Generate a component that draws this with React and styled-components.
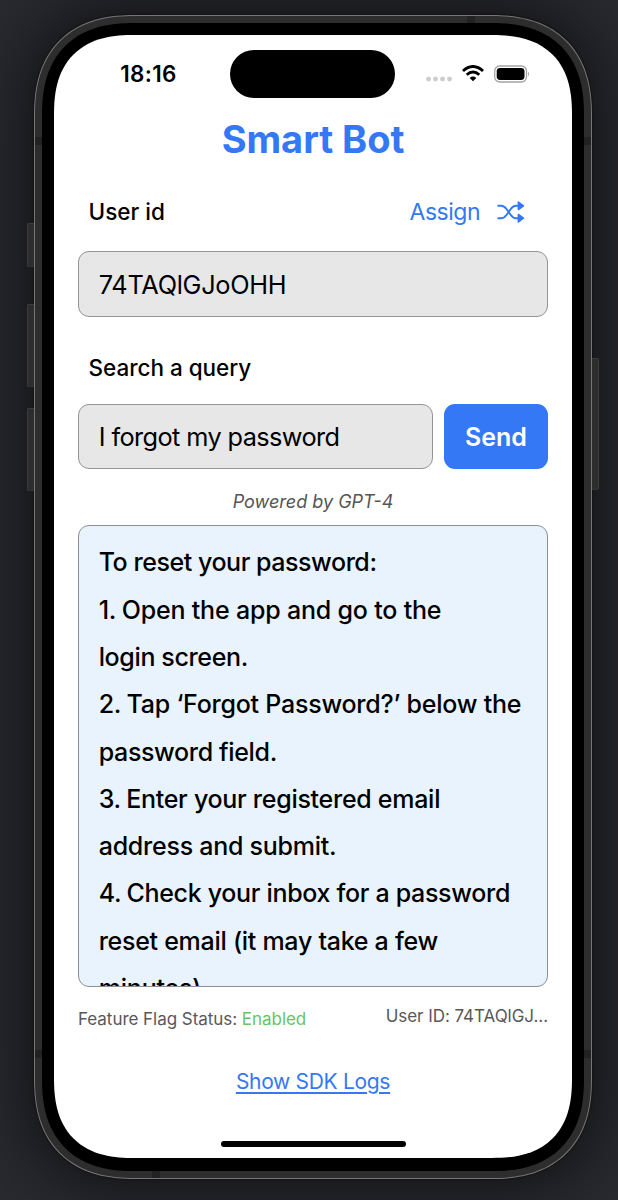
import React from 'react';
import styled, { createGlobalStyle } from 'styled-components';

const blue = '#3478f6';

const GlobalStyle = createGlobalStyle`
  *, *::before, *::after { box-sizing: border-box; }
  html, body { margin: 0; padding: 0; }
  body { font-family: Inter, "Liberation Sans", sans-serif; color: #000; overflow: hidden; }
`;

const Stage = styled.main`
  width: 618px;
  height: 1200px;
  padding: 15px 26px 21px 34px;
  background: #292a30;
  overflow: hidden;
`;

const Phone = styled.div`
  position: relative;
  width: 558px;
  height: 1164px;
  padding: 1px;
  background: #777675;
  border-radius: 100px;
  corner-shape: superellipse(1.24);
  box-shadow: 0 0 2px #050505, 0 0 70px 8px rgba(0, 0, 0, 0.62);
`;

const Frame = styled.div`
  height: 100%;
  padding: 7px;
  background: #2d2d2d;
  border-radius: 99px;
  corner-shape: superellipse(1.24);
`;

const Bezel = styled.div`
  height: 100%;
  padding: 12px 12px 13px;
  background: #000;
  border-radius: 92px;
  corner-shape: superellipse(1.26);
`;

const Screen = styled.div`
  position: relative;
  height: 100%;
  padding: 0 24px;
  display: flex;
  flex-direction: column;
  background: #fff;
  border-radius: 80px;
  corner-shape: superellipse(1.31);
`;

const SideKey = styled.span`
  position: absolute;
  ${(p) => (p.$side === 'left' ? 'left: -7px' : 'right: -7px')};
  top: ${(p) => p.$top}px;
  width: 7px;
  height: ${(p) => p.$size}px;
  background: #2d2d2d;
  border: 1px solid #3b3b3a;
  border-bottom-color: #343434;
  ${(p) => (p.$side === 'left' ? 'border-right: 0; border-radius: 2px 0 0 2px' : 'border-left: 0; border-radius: 0 2px 2px 0')};
`;

const Antenna = styled.span`
  position: absolute;
  background: #222;
  ${(p) => (p.$edge === 'left' || p.$edge === 'right' ? 'width: 7px; height: 8px' : 'width: 8px; height: 7px')};
  ${(p) => p.$edge}: 1px;
  ${(p) => (p.$edge === 'left' || p.$edge === 'right' ? 'top' : 'left')}: ${(p) => p.$at}px;
`;

const StatusBar = styled.header`
  display: flex;
  align-items: center;
  height: 48px;
  margin-top: 15px;
  padding: 0 18.5px 0 42.3px;
`;

const Clock = styled.time`
  width: 110.2px;
  font-size: 22.4px;
  line-height: 28px;
  font-weight: 600;
  letter-spacing: 0.3px;
`;

const Island = styled.div`
  width: 165px;
  height: 48px;
  border-radius: 24px;
  background: #000;
`;

const Indicators = styled.div`
  display: flex;
  align-items: center;
  margin-left: auto;
  height: 18px;
  margin-bottom: 1px;
`;

const Title = styled.h1`
  margin: 16px 0 0;
  font-size: 38px;
  line-height: 50px;
  font-weight: 700;
  text-align: center;
  color: ${blue};
  letter-spacing: -0.05px;
`;

const LabelRow = styled.div`
  display: flex;
  align-items: center;
  justify-content: space-between;
  height: 30px;
  margin-top: ${(p) => p.$gap}px;
  padding: 0 23px 0 10.6px;
`;

const Label = styled.label`
  font-size: 22.5px;
  line-height: 30px;
  font-weight: 500;
  letter-spacing: ${(p) => p.$track || 0}px;
`;

const AssignButton = styled.button`
  display: flex;
  align-items: center;
  gap: 17px;
  padding: 0;
  border: 0;
  background: none;
  font: 400 23px/30px Inter, "Liberation Sans", sans-serif;
  letter-spacing: -0.5px;
  color: ${blue};
`;

const Field = styled.div`
  display: flex;
  align-items: center;
  flex: ${(p) => (p.$grow ? '1' : 'none')};
  height: ${(p) => (p.$grow ? 65 : 66)}px;
  padding: 0 19.8px;
  border: 1.4px solid #949496;
  border-radius: 11px;
  background: #e7e7e7;
  font-size: 25.3px;
  white-space: nowrap;
  letter-spacing: ${(p) => p.$track}px;
`;

const UserField = styled(Field)`
  margin-top: 24px;
`;

const QueryRow = styled.div`
  display: flex;
  gap: 11px;
  margin-top: 21px;
`;

const SendButton = styled.button`
  width: 104px;
  height: 65px;
  padding: 0;
  border: 0;
  border-radius: 11px;
  background: ${blue};
  color: #fff;
  font: 600 25px/30px Inter, "Liberation Sans", sans-serif;
  letter-spacing: 0;
`;

const PoweredBy = styled.p`
  margin: 21px 0 0;
  font-size: 18px;
  line-height: 24px;
  font-style: italic;
  text-align: center;
  color: #555;
`;

const Answer = styled.section`
  height: 462px;
  margin-top: 11px;
  padding: 13.4px 19px 0 19.7px;
  border: 1.4px solid #8e8f92;
  border-radius: 11px;
  background: #e8f3fd;
  overflow: hidden;
`;

const Line = styled.p`
  margin: 0;
  font-size: 25px;
  line-height: 47.3px;
  font-weight: 500;
  white-space: pre;
  letter-spacing: ${(p) => p.$track}px;
`;

const Num = styled.span`
  word-spacing: -0.8px;
`;

const MetaRow = styled.div`
  display: flex;
  justify-content: space-between;
  align-items: flex-start;
  height: 60px;
  margin-top: 17px;
  font-size: 17px;
  line-height: 24px;
  letter-spacing: -0.04px;
  color: #58585a;
`;

const FlagStatus = styled.span`
  margin-top: 3px;
  white-space: pre;
`;

const Enabled = styled.span`
  color: #65c466;
`;

const LogsLink = styled.a`
  align-self: center;
  margin-top: 5px;
  font-size: 21px;
  line-height: 26px;
  letter-spacing: -0.31px;
  color: ${blue};
  text-decoration: underline;
  text-decoration-thickness: 2px;
  text-underline-offset: 2.5px;
`;

const HomeBar = styled.div`
  align-self: center;
  width: 185px;
  height: 6px;
  margin-top: auto;
  margin-bottom: 11px;
  border-radius: 3px;
  background: #000;
`;

const CellDots = () => (
  <svg width="27" height="17" viewBox="0 0 27 17" fill="#ccc">
    {[0, 7, 14, 21].map((x) => (
      <rect key={x} x={x + 0.3} y="11.7" width="4.5" height="4.5" rx="1.6" />
    ))}
  </svg>
);

const Wifi = styled.svg`
  margin-left: 9px;
`;

const Battery = styled.svg`
  margin-left: 10px;
`;

const WifiIcon = () => (
  <Wifi width="22" height="17" viewBox="0 0 22 17">
    <g fill="none" stroke="#000" strokeWidth="2.9">
      <path d="M1 6 Q11 -3 21 6" />
      <path d="M4.7 9.8 Q11 4 17.3 9.8" />
    </g>
    <path d="M11 16.3 L7.7 13 Q11 10.1 14.3 13 Z" fill="#000" />
  </Wifi>
);

const BatteryIcon = () => (
  <Battery width="36" height="18" viewBox="0 0 36 18">
    <rect x="0.7" y="1" width="31.8" height="16" rx="5" fill="none" stroke="#a4a4a4" strokeWidth="1.3" />
    <rect x="2.7" y="3" width="27.8" height="12" rx="3.4" fill="#000" />
    <path d="M34 6.5 Q36 9 34 11.5 Z" fill="#a4a4a4" />
  </Battery>
);

const ShuffleIcon = () => (
  <svg width="28" height="22" viewBox="0 0 28 22">
    <g fill="none" stroke={blue} strokeWidth="2" strokeLinecap="round">
      <path d="M1.3 4.8 H4 C6.6 4.8 8 6 9.5 8 L13.8 14 C15.2 16 16.8 17.2 19 17.2 H22" />
      <path d="M1.3 17.2 H4 C6.6 17.2 8 16 9.5 14 L13.8 8 C15.2 6 16.8 4.8 19 4.8 H22" />
    </g>
    <g fill={blue} stroke={blue} strokeWidth="1.6" strokeLinejoin="round">
      <path d="M21.4 1.1 L26.4 4.8 L21.4 8.5 Z" />
      <path d="M21.4 13.5 L26.4 17.2 L21.4 20.9 Z" />
    </g>
  </svg>
);

const answerLines = [
  { text: 'To reset your password:', track: -0.45 },
  { num: '1. ', text: 'Open the app and go to the', track: -0.19 },
  { text: 'login screen.', track: -0.37 },
  { num: '2. ', text: 'Tap ‘Forgot Password?’ below the', track: -0.24 },
  { text: 'password field.', track: -0.35 },
  { num: '3. ', text: 'Enter your registered email', track: -0.28 },
  { text: 'address and submit.', track: -0.25 },
  { num: '4. ', text: 'Check your inbox for a password', track: -0.32 },
  { text: 'reset email (it may take a few', track: -0.28 },
  { text: 'minutes)', track: -0.2 },
];

export default function App() {
  return (
    <>
      <GlobalStyle />
      <Stage>
        <Phone>
          <SideKey $side="left" $top={208} $size={44} />
          <SideKey $side="left" $top={289} $size={83} />
          <SideKey $side="left" $top={393} $size={83} />
          <SideKey $side="right" $top={343} $size={132} />
          <Frame>
            <Bezel>
              <Screen>
                <StatusBar>
                  <Clock>18:16</Clock>
                  <Island />
                  <Indicators>
                    <CellDots />
                    <WifiIcon />
                    <BatteryIcon />
                  </Indicators>
                </StatusBar>
                <Title>Smart Bot</Title>
                <LabelRow $gap={33}>
                  <Label $track={0}>User id</Label>
                  <AssignButton>
                    Assign
                    <ShuffleIcon />
                  </AssignButton>
                </LabelRow>
                <UserField $track={-0.28}>74TAQlGJoOHH</UserField>
                <LabelRow $gap={36}>
                  <Label $track={-0.03}>Search a query</Label>
                </LabelRow>
                <QueryRow>
                  <Field $grow $track={-0.6}>I forgot my password</Field>
                  <SendButton>Send</SendButton>
                </QueryRow>
                <PoweredBy>Powered by GPT-4</PoweredBy>
                <Answer>
                  {answerLines.map(({ num, text, track }) => (
                    <Line key={text} $track={track}>
                      {num && <Num>{num}</Num>}
                      {text}
                    </Line>
                  ))}
                </Answer>
                <MetaRow>
                  <FlagStatus>
                    Feature Flag Status: <Enabled>Enabled</Enabled>
                  </FlagStatus>
                  <span>User ID: 74TAQlGJ...</span>
                </MetaRow>
                <LogsLink>Show SDK Logs</LogsLink>
                <HomeBar />
              </Screen>
            </Bezel>
          </Frame>
          <Antenna $edge="left" $at={122} />
          <Antenna $edge="right" $at={122} />
          <Antenna $edge="left" $at={1035} />
          <Antenna $edge="right" $at={1035} />
          <Antenna $edge="top" $at={433} />
          <Antenna $edge="bottom" $at={118} />
        </Phone>
      </Stage>
    </>
  );
}
